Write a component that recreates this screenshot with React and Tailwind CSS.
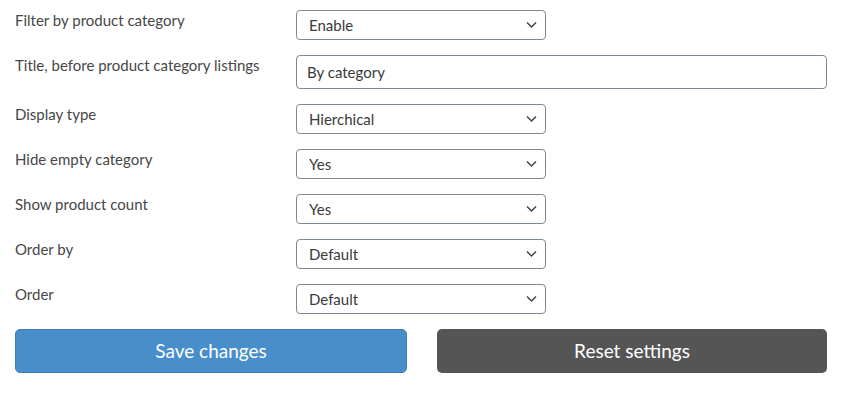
import { useState } from 'react'

const rows = [
  { label: 'Filter by product category', value: 'Enable', options: ['Enable', 'Disable'] },
  { label: 'Title, before product category listings', input: 'By category' },
  { label: 'Display type', value: 'Hierchical', options: ['Hierchical', 'Flat'] },
  { label: 'Hide empty category', value: 'Yes', options: ['Yes', 'No'] },
  { label: 'Show product count', value: 'Yes', options: ['Yes', 'No'] },
  { label: 'Order by', value: 'Default', options: ['Default', 'Name', 'Count'] },
  { label: 'Order', value: 'Default', options: ['Default', 'ASC', 'DESC'] },
]

function Chevron() {
  return (
    <svg
      className="pointer-events-none absolute right-[9px] top-1/2 -translate-y-1/2"
      width="11"
      height="7"
      viewBox="0 0 11 7"
      fill="none"
    >
      <path d="M1 1l4.5 4.5L10 1" stroke="#444" strokeWidth="1.5" />
    </svg>
  )
}

function SelectField({ value, options }) {
  const [v, setV] = useState(value)
  return (
    <div className="relative w-[250px]">
      <select
        value={v}
        onChange={e => setV(e.target.value)}
        className="block h-[30px] w-full appearance-none rounded-[4px] border border-[#7d8893] bg-white pl-[12px] pr-8 text-[15px] text-[#3a3a3a] outline-none"
      >
        {options.map(o => (
          <option key={o}>{o}</option>
        ))}
      </select>
      <Chevron />
    </div>
  )
}

export default function App() {
  const [title, setTitle] = useState('By category')

  return (
    <div
      className="w-[841px] bg-white pl-[15px] pr-[14px] pt-[10px] text-[#444]"
      style={{ fontFamily: 'Lato, "Liberation Sans", sans-serif' }}
    >
      <div className="flex flex-col gap-[15px]">
        {rows.map(r => (
          <div key={r.label} className="flex">
            <div className="w-[281px] shrink-0 text-[15px] leading-[20px] text-[#474747]">{r.label}</div>
            {r.input !== undefined ? (
              <input
                value={title}
                onChange={e => setTitle(e.target.value)}
                className="h-[34px] flex-1 rounded-[4px] border border-[#7d8893] bg-white px-[10px] text-[15px] text-[#3a3a3a] outline-none"
              />
            ) : (
              <SelectField value={r.value} options={r.options} />
            )}
          </div>
        ))}
        <div className="flex gap-[30px]">
          <button className="h-[44px] flex-1 rounded-[5px] border border-[#3f7fbd] bg-[#488ecb] text-[19px] text-white">
            Save changes
          </button>
          <button className="h-[44px] flex-1 rounded-[5px] bg-[#555555] text-[19px] text-white">
            Reset settings
          </button>
        </div>
      </div>
    </div>
  )
}
